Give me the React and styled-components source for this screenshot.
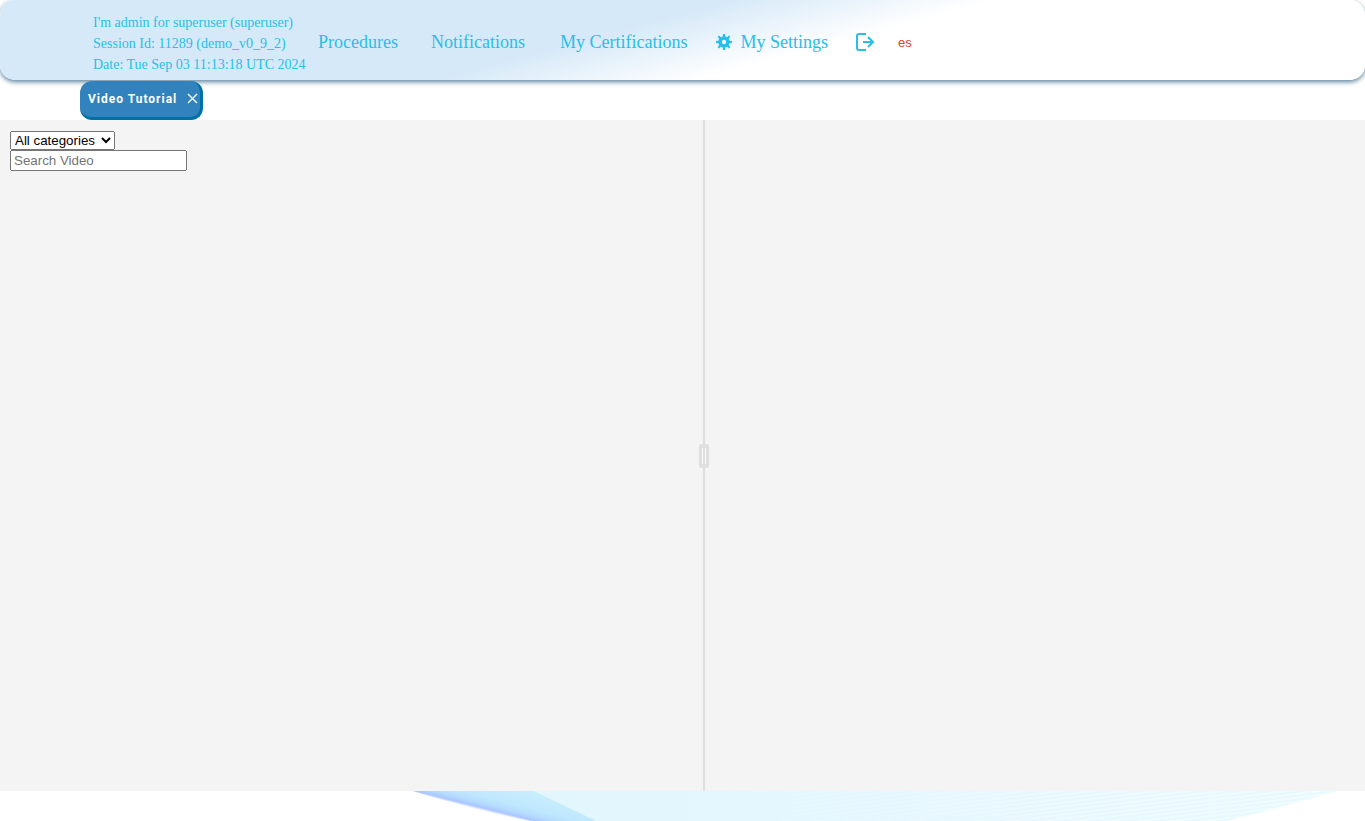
import React from 'react';
import styled, { createGlobalStyle } from 'styled-components';

const GlobalStyle = createGlobalStyle`
  * { box-sizing: border-box; }
  html, body, #root { height: 100%; }
  body {
    margin: 0;
    background: #fff;
    font-family: "Liberation Sans", Arial, sans-serif;
  }
`;

const Page = styled.div`
  display: flex;
  flex-direction: column;
  min-height: 100%;
`;

const Header = styled.header`
  display: flex;
  align-items: center;
  height: 80px;
  padding: 6px 0 0 93px;
  border-radius: 15px;
  color: #26bfe9;
  font-family: "Liberation Serif", "Times New Roman", serif;
  white-space: nowrap;
  background: linear-gradient(165deg, #d6e9f8 44%, #fff 60%);
  box-shadow: 0 2px 5px #5a819d;
`;

const Session = styled.div`
  width: 225px;
  font-size: 14px;
  line-height: 21px;
`;

const Nav = styled.nav`
  display: flex;
  align-items: center;
  padding-bottom: 2px;
  font-size: 18px;
  line-height: 20px;
`;

const NavLink = styled.a`
  display: flex;
  align-items: center;
  gap: 8px;
  margin-right: ${(p) => p.$gap}px;
  color: inherit;
  text-decoration: none;
`;

const LanguageLink = styled.a`
  padding-top: 2px;
  color: #e53935;
  font-family: "Liberation Sans", Arial, sans-serif;
  font-size: 13px;
  text-decoration: none;
`;

const TabBar = styled.div`
  display: flex;
  height: 40px;
  padding: 1px 80px 0;
`;

const Tab = styled.div`
  position: relative;
  display: flex;
  align-items: center;
  justify-content: space-between;
  width: 123px;
  height: 39px;
  padding: 0 2px 1px 8px;
  border: solid #0071a6;
  border-width: 0 3px 3px 0;
  border-radius: 12px;
  background: #3182bd;
`;

const TabButton = styled.button`
  display: flex;
  padding: 0;
  border: 0;
  background: none;
  color: #fff;
  font: bold 12px/16px Roboto, Arial, sans-serif;
  letter-spacing: 1px;
  white-space: nowrap;
`;

const Workspace = styled.main`
  display: flex;
  flex: 1;
  min-height: 0;
  background: #f4f4f4;
`;

const Pane = styled.section`
  display: flex;
  flex-direction: column;
  align-items: flex-start;
  flex: ${(p) => p.$grow} 1 0;
  min-width: 0;
  padding: 11px 10px;
`;

const CategorySelect = styled.select`
  width: 105px;
  height: 19px;
  font-family: "Liberation Sans", Arial, sans-serif;
`;

const SearchInput = styled.input`
  width: 177px;
  height: 21px;
  font-family: "Liberation Sans", Arial, sans-serif;
`;

const Splitter = styled.div`
  display: flex;
  align-items: center;
  justify-content: center;
  width: 2px;
  background: #e0e0e0;
`;

const Grip = styled.div`
  display: flex;
  flex-shrink: 0;
  justify-content: center;
  gap: 2px;
  width: 10px;
  height: 24px;
  padding: 4px 0;
  border-radius: 2px;
  background: #e0e0e0;
`;

const GripLine = styled.span`
  width: 1px;
  background: #f9f9f9;
`;

const Footer = styled.footer`
  height: 30px;
  overflow: hidden;
`;

const Wave = styled.svg`
  display: block;
  width: 100%;
  height: 30px;
`;

const GearIcon = () => (
  <svg width="16" height="16" viewBox="0 0 16 16" aria-hidden="true">
    <g fill="#26bfe9">
      {[0, 45, 90, 135].map((a) => (
        <path key={a} d="M6.9 0h2.2v16H6.9z" transform={`rotate(${a} 8 8)`} />
      ))}
      <circle cx="8" cy="8" r="5.8" />
    </g>
    <circle cx="8" cy="8" r="2.2" fill="#edf5fc" />
  </svg>
);

const LogoutIcon = () => (
  <svg width="20" height="18" viewBox="0 0 20 18" fill="none" stroke="#26bfe9" strokeWidth="2" aria-hidden="true">
    <path d="M10 1H3Q1 1 1 3v12q0 2 2 2h7" />
    <path d="M7 9h10M12 4l5 5-5 5" />
  </svg>
);

const CloseIcon = () => (
  <svg width="12" height="16" viewBox="0 0 12 16" aria-hidden="true">
    <path d="M2 3l9 9M11 3l-9 9" stroke="#e8f2f9" strokeWidth="1.5" />
  </svg>
);

const FooterWave = () => (
  <Wave viewBox="0 0 1365 30" preserveAspectRatio="none" aria-hidden="true">
    <defs>
      <linearGradient id="ribbon" gradientUnits="userSpaceOnUse" x1="460" y1="13" x2="475" y2="-47">
        <stop offset="0" stopColor="#a9c6ff" stopOpacity="0.4" />
        <stop offset="0.03" stopColor="#a9c6ff" />
        <stop offset="0.1" stopColor="#b5dcff" />
        <stop offset="0.2" stopColor="#bfe7fe" />
        <stop offset="0.6" stopColor="#cdf0fd" />
      </linearGradient>
      <linearGradient id="sheet" x1="0" x2="1" y1="0" y2="0">
        <stop offset="0" stopColor="#e2f6fe" />
        <stop offset="0.5" stopColor="#e5f7fe" />
        <stop offset="1" stopColor="#e7faff" />
      </linearGradient>
      <linearGradient id="fade" gradientUnits="userSpaceOnUse" x1="640" x2="1337" y1="0" y2="0">
        <stop offset="0" stopColor="#fff" stopOpacity="0" />
        <stop offset="1" stopColor="#fff" />
      </linearGradient>
      <pattern id="threads" width="26" height="4" patternUnits="userSpaceOnUse" patternTransform="skewY(-7)">
        <path d="M0 2h26" stroke="#fff" strokeWidth="1" />
      </pattern>
      <mask id="threadMask">
        <rect width="1365" height="30" fill="url(#fade)" />
      </mask>
    </defs>
    <path d="M530 0H1337Q1282 16 1227 30H594Z" fill="url(#sheet)" />
    <path d="M640 0H1337Q1282 16 1227 30H640Z" fill="url(#threads)" mask="url(#threadMask)" />
    <path d="M412 0H534L596 30H530Q468 17 412 0Z" fill="url(#ribbon)" />
  </Wave>
);

export default function App() {
  return (
    <Page>
      <GlobalStyle />
      <Header>
        <Session>
          <div>I'm admin for superuser (superuser)</div>
          <div>Session Id: 11289 (demo_v0_9_2)</div>
          <div>Date: Tue Sep 03 11:13:18 UTC 2024</div>
        </Session>
        <Nav>
          <NavLink href="#procedures" $gap={33}>Procedures</NavLink>
          <NavLink href="#notifications" $gap={35}>Notifications</NavLink>
          <NavLink href="#certifications" $gap={29}>My Certifications</NavLink>
          <NavLink href="#settings" $gap={28}><GearIcon />My Settings</NavLink>
          <NavLink href="#logout" $gap={22} aria-label="Log out"><LogoutIcon /></NavLink>
          <LanguageLink href="#es">es</LanguageLink>
        </Nav>
      </Header>
      <TabBar>
        <Tab>
          <TabButton type="button">Video Tutorial</TabButton>
          <TabButton type="button" aria-label="Close tab"><CloseIcon /></TabButton>
        </Tab>
      </TabBar>
      <Workspace>
        <Pane $grow={684}>
          <CategorySelect aria-label="Category" defaultValue="all">
            <option value="all">All categories</option>
          </CategorySelect>
          <SearchInput type="text" placeholder="Search Video" aria-label="Search video" />
        </Pane>
        <Splitter role="separator" aria-orientation="vertical">
          <Grip>
            <GripLine />
            <GripLine />
          </Grip>
        </Splitter>
        <Pane $grow={640} />
      </Workspace>
      <Footer>
        <FooterWave />
      </Footer>
    </Page>
  );
}
